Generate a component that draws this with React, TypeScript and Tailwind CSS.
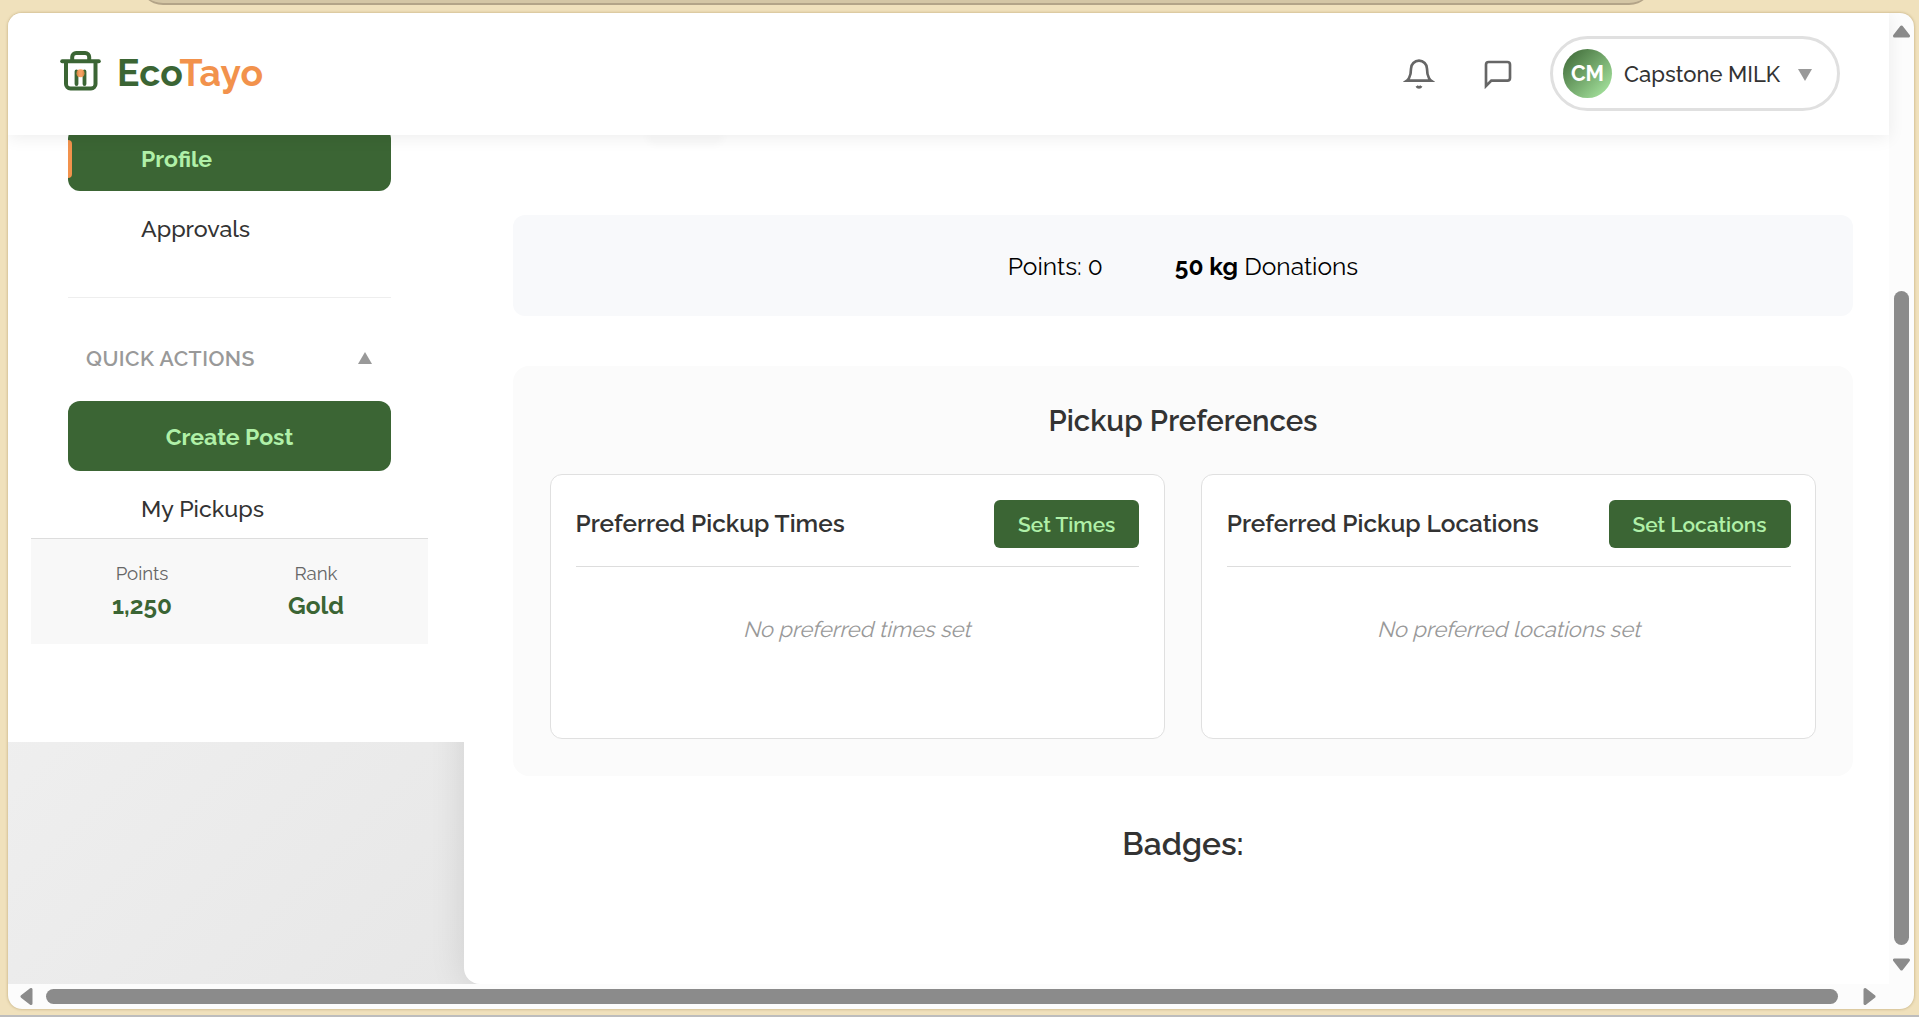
import type { ReactNode } from "react";

function TrashLogo() {
  return (
    <svg width="42" height="40" viewBox="0 0 42 40" fill="none" stroke="#3b6534" strokeLinecap="round" strokeLinejoin="round">
      <path d="M2.2 10.2H38.8" strokeWidth="4" />
      <path d="M6 11V33a4.5 4.5 0 0 0 4.5 4.5H31a4.5 4.5 0 0 0 4.5-4.5V11" strokeWidth="4" />
      <path d="M12.2 9V6a4 4 0 0 1 4-4h9a4 4 0 0 1 4 4v3" strokeWidth="4" />
      <path d="M16.5 20.5V33M24.5 20.5V33" strokeWidth="3.8" />
      <circle cx="20.5" cy="22.3" r="4" fill="#f2924c" fillOpacity=".88" stroke="none" />
    </svg>
  );
}

function BellIcon() {
  return (
    <svg width="32" height="32" viewBox="0 0 24 24" fill="none" stroke="#666" strokeWidth="2">
      <path d="M18 8A6 6 0 0 0 6 8c0 7-3 9-3 9h18s-3-2-3-9" />
      <path d="M13.73 21a2 2 0 0 1-3.46 0" />
    </svg>
  );
}

function ChatIcon() {
  return (
    <svg width="32" height="32" viewBox="0 0 24 24" fill="none" stroke="#666" strokeWidth="2">
      <path d="M21 15a2 2 0 0 1-2 2H7l-4 4V5a2 2 0 0 1 2-2h14a2 2 0 0 1 2 2z" />
    </svg>
  );
}

function Header() {
  return (
    <header className="relative z-20 flex h-[122px] w-[1881px] shrink-0 items-center justify-between bg-white pr-[49px] pb-px pl-[52px] shadow-[0_3px_16px_rgba(0,0,0,0.07)]">
      <div className="flex items-center">
        <div className="-mt-[6px]">
          <TrashLogo />
        </div>
        <div className="-mt-0.5 ml-[15px] text-[37.33px] leading-[44px] font-bold tracking-[0.2px] text-[#3b6534]">
          Eco<span className="text-[#f2924c]">Tayo</span>
        </div>
      </div>
      <div className="flex items-center">
        <BellIcon />
        <div className="ml-[47px]">
          <ChatIcon />
        </div>
        <div className="ml-[36px] flex h-[75px] w-[290px] items-center rounded-full border-[3px] border-[#e0e0e0] pl-[10px]">
          <div className="flex size-[49px] items-center justify-center rounded-full bg-linear-135 from-[#3b6534] to-[#b0f0a8] text-[21.33px] font-bold text-white">
            CM
          </div>
          <span className="mt-0.5 ml-3 w-[158px] text-[22px] font-medium whitespace-nowrap text-[#333]">Capstone MILK</span>
          <svg className="mt-0.5 ml-4" width="14" height="12" viewBox="0 0 14 12" fill="#999">
            <path d="M0 0H14L7 12Z" />
          </svg>
        </div>
      </div>
    </header>
  );
}

function NavItem({ children }: { children: ReactNode }) {
  return <div className="mt-1.5 flex h-16 items-center pt-px pl-[73px] text-[23.2px] font-medium text-[#333]">{children}</div>;
}

function Sidebar() {
  return (
    <aside className="relative z-10 h-[607px] w-[456px] shrink-0 bg-white">
      <div className="-mt-2 flex h-[411px] flex-col pl-[60px]">
        <div className="w-[323px]">
          <div className="flex h-16 items-center rounded-xl bg-[#3b6534]">
            <div className="h-[38px] w-1 rounded-r-sm bg-[#f2924c]" />
            <span className="ml-[69px] text-[23px] font-bold text-[#b0f0a8]">Profile</span>
          </div>
          <div className="flex h-[107px] flex-col border-b border-[#eee]">
            <NavItem>Approvals</NavItem>
          </div>
          <div className="mt-[41px] flex h-10 items-center justify-between pr-[19px] pl-[18px] text-[#999]">
            <span className="text-[21.2px] font-semibold tracking-[0.5px]">QUICK ACTIONS</span>
            <svg className="-mt-0.5" width="14" height="12" viewBox="0 0 14 12" fill="#999">
              <path d="M0 12H14L7 0Z" />
            </svg>
          </div>
          <div className="mt-[22px] flex h-[70px] items-center justify-center rounded-xl bg-[#3b6534] pt-0.5 text-[23px] font-bold text-[#b0f0a8]">
            Create Post
          </div>
          <NavItem>My Pickups</NavItem>
        </div>
      </div>
      <div className="ml-[23px] flex h-[106px] w-[397px] border-t border-[#ddd] bg-[#f8f8f8] pt-[19px] pl-6 text-center">
        <div className="w-[174px]">
          <div className="text-[18.67px] leading-[30px] text-[#666]">Points</div>
          <div className="mt-px text-[24.4px] leading-[34px] font-bold text-[#3b6534]">1,250</div>
        </div>
        <div className="w-[174px]">
          <div className="text-[18.67px] leading-[30px] text-[#666]">Rank</div>
          <div className="mt-px text-[24.4px] leading-[34px] font-bold text-[#3b6534]">Gold</div>
        </div>
      </div>
    </aside>
  );
}

function PreferenceCard({ title, action, empty }: { title: string; action: ReactNode; empty: string }) {
  return (
    <section className="h-[265px] flex-1 rounded-xl border border-[#e0e0e0] bg-white px-[24.5px] pt-[25px]">
      <div className="flex h-[67px] items-start justify-between border-b border-[#ddd]">
        <h3 className="text-[24.4px] leading-[48px] font-semibold whitespace-nowrap text-[#333]">{title}</h3>
        {action}
      </div>
      <p className="mt-[38px] pl-[3px] text-center text-[21.9px] leading-[48px] whitespace-nowrap text-[#999]">
        <span className="inline-block -skew-x-[14deg]">{empty}</span>
      </p>
    </section>
  );
}

function Main() {
  return (
    <main className="relative h-[849px] w-[1425px] shrink-0 rounded-bl-2xl bg-white pr-9 pl-[49px] shadow-[0_0_36px_rgba(0,0,0,0.11)]">
      <div className="flex h-20 items-start pl-[133px]">
        <div className="h-2.5 w-[78px] rounded-b-full bg-black/[0.02] blur-[3px]" />
      </div>
      <div className="flex h-[101px] items-center justify-center gap-[72px] rounded-xl bg-[#f8f9fb] pt-[3px] text-[24.53px] text-black">
        <span>Points: 0</span>
        <span>
          <strong className="font-bold">50 kg</strong> Donations
        </span>
      </div>
      <section className="mt-[50px] h-[410px] rounded-2xl bg-[#fbfbfb] px-[37px] pt-[35px]">
        <h2 className="text-center text-[29.33px] leading-[40px] font-semibold text-[#333]">Pickup Preferences</h2>
        <div className="mt-[33px] flex gap-[36.5px]">
          <PreferenceCard
            title="Preferred Pickup Times"
            action={
              <button className="h-12 w-[145px] rounded-md bg-[#3b6534] pt-px text-[20.9px] font-semibold text-[#b0f0a8]">Set Times</button>
            }
            empty="No preferred times set"
          />
          <PreferenceCard
            title="Preferred Pickup Locations"
            action={
              <button className="h-12 w-[182px] rounded-md bg-[#3b6534] pt-px text-[20.9px] font-semibold text-[#b0f0a8]">Set Locations</button>
            }
            empty="No preferred locations set"
          />
        </div>
      </section>
      <h2 className="mt-[44px] text-center text-[31.8px] leading-[48px] font-semibold text-[#333]">Badges:</h2>
    </main>
  );
}

function Arrow({ className }: { className: string }) {
  return (
    <svg className={className} width="17" height="13" viewBox="0 0 17 13" fill="#8b8b8b" stroke="#8b8b8b" strokeWidth="3" strokeLinejoin="round">
      <path d="M8.5 2L15.5 11H1.5Z" />
    </svg>
  );
}

export default function App() {
  return (
    <div className="relative flex h-[1017px] w-[1919px] flex-col overflow-hidden bg-[#f0e1bc] font-['Raleway','Lato',sans-serif]">
      <div className="ml-[139px] h-[5px] w-[1514px] shrink-0 overflow-hidden">
        <div className="-mt-[45px] h-[50px] rounded-[24px] border-b-2 border-[#b3a488] bg-[#d4c6a5]" />
      </div>
      <div className="mt-2 ml-2 flex h-[996px] w-[1906px] shrink-0 overflow-hidden rounded-[14px] bg-[#fcfcfc] shadow-[0_0_3px_rgba(120,90,30,0.45)]">
        <div className="flex w-[1881px] shrink-0 flex-col">
          <Header />
          <div className="flex h-[849px] items-start overflow-hidden bg-linear-135 from-[#f5f5f5] to-[#d8d8d8]">
            <Sidebar />
            <Main />
          </div>
          <div className="flex h-[25px] items-center">
            <Arrow className="ml-[10px] -rotate-90" />
            <div className="ml-[11px] h-[15px] w-[1792px] rounded-full bg-[#8b8b8b]" />
            <Arrow className="ml-[23px] rotate-90" />
          </div>
        </div>
        <div className="flex h-[971px] w-[25px] flex-col items-center">
          <Arrow className="mt-3" />
          <div className="mt-[253px] h-[654px] w-[15px] rounded-full bg-[#8b8b8b]" />
          <Arrow className="mt-[13px] rotate-180" />
        </div>
      </div>
      <div className="mt-1.5 h-0.5 w-full shrink-0 bg-[#bdbdbd]" />
    </div>
  );
}
